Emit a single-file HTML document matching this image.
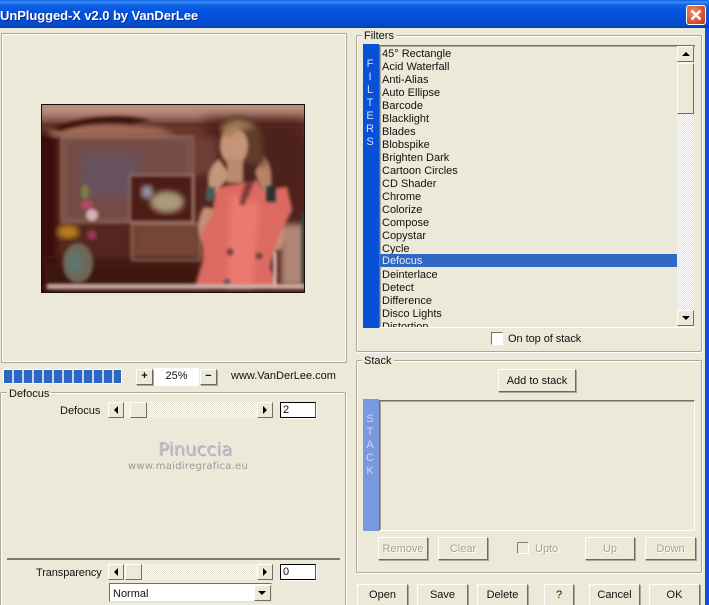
<!DOCTYPE html>
<html><head><meta charset="utf-8"><style>
html,body{margin:0;padding:0;width:709px;height:605px;overflow:hidden}
body{position:relative;background:#ece9d8;font:11px/13px "Liberation Sans",sans-serif;color:#111}
#r{left:0;top:0;width:709px;height:605px;overflow:hidden;background:#ece9d8}
div,span{position:absolute;box-sizing:border-box;white-space:nowrap}
.grp{border:1px solid #aca899;box-shadow:inset 1px 1px 0 #fff,1px 1px 0 #fff;border-radius:2px}
.lg{background:#ece9d8;padding:0 2px;line-height:13px;height:13px}
.b{background:#ece9d8;border:1px solid;border-color:#fff #6f6c5f #6f6c5f #fff;box-shadow:1px 1px 0 #aca899;text-align:center;line-height:22px;height:23px}
.dis{color:#a5a294;text-shadow:1px 1px 0 #fff}
.track{background:repeating-conic-gradient(#fff 0 25%,#e4e1d0 0 50%) 0 0/2px 2px}
.sb{background:#ece9d8;border:1px solid;border-color:#fff #716f64 #716f64 #fff}
.up{width:0;height:0;border-left:4px solid transparent;border-right:4px solid transparent;border-bottom:4px solid #000}
.dn{width:0;height:0;border-left:4px solid transparent;border-right:4px solid transparent;border-top:4px solid #000}
.lf{width:0;height:0;border-top:4px solid transparent;border-bottom:4px solid transparent;border-right:4px solid #000}
.rt{width:0;height:0;border-top:4px solid transparent;border-bottom:4px solid transparent;border-left:4px solid #000}
.sun{background:#ece9d8;border:1px solid;border-color:#716f64 #fff #fff #716f64;box-shadow:inset 1px 1px 0 #aca899}
.edit{background:#fff;border:1px solid #000;border-right-color:#555;line-height:15px;padding-left:2px;box-shadow:1px 1px 0 #fff}
.li{left:382px;height:13px;line-height:13px}
.v{text-align:center;width:12px;line-height:13px;color:#d8e6ff}
</style></head><body><div id="r">
<!-- title bar -->
<div style="left:0;top:0;width:709px;height:28px;background:linear-gradient(#0a5fe0 0,#3a8cf5 2px,#0f62e4 5px,#0453dc 12px,#0450d8 20px,#0349c4 26px,#0a3fa8 28px)"></div>
<div style="left:0;top:7px;font:bold 13px/17px 'Liberation Sans',sans-serif;color:#fff;text-shadow:1px 1px 0 #0a2f90;letter-spacing:-.07px">UnPlugged-X v2.0 by VanDerLee</div>
<div style="left:686px;top:5px;width:20px;height:20px;border-radius:3px;border:1px solid #fff;background:radial-gradient(circle at 35% 35%,#ee9070,#d8532f 60%,#b83a18)"></div>
<svg style="position:absolute;left:686px;top:5px" width="20" height="20"><path d="M5.5 5.5L14.500 14.500M14.500 5.500L5.500 14.500" stroke="#fff" stroke-width="2.300" fill="none"/></svg>
<div style="left:705px;top:28px;width:4px;height:577px;background:#0a50d8"></div>

<!-- preview panel -->
<div style="left:1px;top:33px;width:346px;height:330px;border:1px solid #aca899;box-shadow:-1px -1px 0 #fff inset,1px 1px 0 #fff inset;border-radius:1px"></div>
<svg style="position:absolute;left:41px;top:104px" width="264" height="189" viewBox="0 0 264 189">
<defs>
<filter id="f1"><feGaussianBlur stdDeviation="6"/></filter>
<filter id="f2"><feGaussianBlur stdDeviation="3"/></filter>
<filter id="f3"><feGaussianBlur stdDeviation="1.300"/></filter>
<filter id="fa" x="-5%" y="-5%" width="110%" height="110%"><feGaussianBlur stdDeviation="1.100"/></filter>
<clipPath id="c"><rect width="264" height="189"/></clipPath>
</defs>
<rect width="264" height="189" fill="#55261f"/>
<g clip-path="url(#c)"><g filter="url(#fa)">
<rect x="-10" y="-10" width="290" height="26" fill="#bd8f80" filter="url(#f1)"/>
<rect x="-10" y="20" width="290" height="14" fill="#6a372c" filter="url(#f2)"/>
<rect x="-10" y="30" width="26" height="180" fill="#3a0c0e" filter="url(#f2)"/>
<rect x="21" y="33" width="131" height="85" fill="#744c44" filter="url(#f2)"/>
<rect x="40" y="48" width="60" height="45" fill="#66525f" filter="url(#f1)"/>
<rect x="91" y="119" width="68" height="37" fill="#754535" filter="url(#f2)"/>
<rect x="0" y="155" width="160" height="30" fill="#3c1510" filter="url(#f1)"/>
<path d="M8 27Q55 14 120 24L135 32 10 33Z" fill="#a06a58" filter="url(#f2)"/>
<path d="M10 24Q60 5 110 16L90 20Q50 16 20 27Z" fill="#3e1410" filter="url(#f3)"/>
<rect x="165" y="15" width="99" height="100" fill="#4e201b" filter="url(#f1)"/>
<rect x="240" y="120" width="24" height="62" fill="#ae8674" filter="url(#f2)"/>
<rect x="260" y="110" width="4" height="72" fill="#2a4a3a" filter="url(#f3)"/>
<!-- frames -->
<rect x="21" y="33" width="131" height="85" fill="none" stroke="#b8917f" stroke-width="1.500" opacity=".85" filter="url(#f3)"/>
<rect x="25" y="36" width="122" height="79" fill="none" stroke="#9c7062" stroke-width="1.500" opacity=".7" filter="url(#f3)"/>
<rect x="151" y="33" width="25" height="38" fill="#8a5a50" opacity=".5" filter="url(#f2)"/>
<rect x="89" y="72" width="62" height="46" fill="#4d1d12" filter="url(#f3)"/>
<rect x="89" y="71" width="63" height="47" fill="none" stroke="#c49e90" stroke-width="1.300" opacity=".85" filter="url(#f3)"/>
<ellipse cx="126" cy="98" rx="17" ry="11" fill="#a99a7a" filter="url(#f2)"/>
<ellipse cx="106" cy="88" rx="6" ry="7" fill="#9a98b0" filter="url(#f2)"/>
<rect x="91" y="120" width="68" height="36" fill="none" stroke="#b8917f" stroke-width="1.500" opacity=".85" filter="url(#f3)"/>
<!-- vase & flowers -->
<ellipse cx="37" cy="159" rx="15" ry="20" fill="#6e6856" filter="url(#f3)"/>
<ellipse cx="34" cy="158" rx="8" ry="11" fill="#5f7470" filter="url(#f2)"/>
<ellipse cx="44" cy="88" rx="4" ry="7" fill="#7b7f45" filter="url(#f3)"/>
<ellipse cx="46" cy="101" rx="6" ry="5" fill="#ae4c66" filter="url(#f3)"/>
<ellipse cx="51" cy="111" rx="6" ry="6" fill="#d8b0bc" filter="url(#f3)"/>
<ellipse cx="27" cy="128" rx="11" ry="7" fill="#b8821e" filter="url(#f2)"/>
<ellipse cx="51" cy="131" rx="5" ry="5" fill="#9c3656" filter="url(#f3)"/>
<!-- woman -->
<path d="M163 103Q152 120 162 140L175 150 176 105ZM230 100Q252 125 240 145L228 150 226 105Z" fill="#c68e74" filter="url(#f3)"/>
<path d="M174 84L216 76 222 86 246 83 251 106 236 136 229 163 236 183 154 183 162 156 161 129 172 109Z" fill="#dc6a62" filter="url(#f3)"/>
<path d="M190 90L186 183H212L218 100Z" fill="#ea7a70" filter="url(#f2)"/>
<path d="M178 55Q164 66 168 84L172 92 178 84 190 72Z" fill="#c4967c" filter="url(#f3)"/>
<path d="M222 52Q232 60 230 82L226 94 218 80 214 68Z" fill="#b88468" filter="url(#f3)"/>
<path d="M180 20Q200 2 220 26L224 62 208 60 185 50Z" fill="#5f3d2c" filter="url(#f2)"/>
<ellipse cx="193" cy="42" rx="14" ry="19" fill="#c69478" filter="url(#f3)"/>
<path d="M180 24Q198 8 214 24L198 26 184 34Z" fill="#a07a56" filter="url(#f2)"/>
<rect x="186" y="55" width="16" height="24" fill="#bb8a70" filter="url(#f3)"/>
<path d="M207 70L198 100 203 102 214 76Z" fill="#4a2420" opacity=".65" filter="url(#f3)"/>
<rect x="165" y="83" width="9" height="14" fill="#4c5a58" filter="url(#f3)"/>
<rect x="225" y="82" width="10" height="16" fill="#26302e" filter="url(#f3)"/>
<circle cx="189" cy="148" r="3.500" fill="#6c3a40" filter="url(#f3)"/>
<circle cx="218" cy="152" r="3.500" fill="#6c3a40" filter="url(#f3)"/>
<circle cx="186" cy="178" r="3.500" fill="#6c5060" filter="url(#f3)"/>
<rect x="232" y="148" width="4" height="35" fill="#dcbcb6" filter="url(#f3)"/>
<rect x="6" y="180" width="258" height="5" fill="#cfaea8" filter="url(#f3)"/>
</g></g>
<rect x=".5" y=".5" width="263" height="188" fill="none" stroke="#111"/>
</svg>

<!-- progress & zoom -->
<div style="left:3px;top:369px;width:119px;height:15px;background:#fff"></div>
<div style="left:4px;top:370px;width:117px;height:13px;background:repeating-linear-gradient(90deg,#2c66c4 0 8px,#c6d4ea 8px 10px)"></div>
<div class="b" style="left:136px;top:369px;width:17px;height:16px;line-height:13px;font-weight:bold">+</div>
<div style="left:154px;top:368px;width:45px;height:18px;background:#fff;text-align:center;line-height:17px">25%</div>
<div class="b" style="left:200px;top:369px;width:17px;height:16px;line-height:13px;font-weight:bold">−</div>
<div style="left:231px;top:370px">www.VanDerLee.com</div>

<!-- defocus group -->
<div class="grp" style="left:0;top:392px;width:346px;height:230px"></div>
<div class="lg" style="left:7px;top:388px">Defocus</div>
<div style="left:60px;top:405px">Defocus</div>
<div class="track" style="left:108px;top:402px;width:165px;height:16px"></div>
<div class="sb" style="left:108px;top:402px;width:16px;height:16px"></div><div class="lf" style="left:114px;top:406px"></div>
<div class="sb" style="left:130px;top:402px;width:17px;height:16px"></div>
<div class="sb" style="left:257px;top:402px;width:16px;height:16px"></div><div class="rt" style="left:263px;top:406px"></div>
<div class="edit" style="left:280px;top:402px;width:36px;height:16px">2</div>
<div style="left:158px;top:439px;font:18px/22px 'DejaVu Sans',sans-serif;color:#bcc0cf;text-shadow:1px 1px 0 #b0b0b0">Pinuccia</div>
<div style="left:128px;top:460px;font:10px/14px 'DejaVu Sans',sans-serif;color:#999;letter-spacing:.25px">www.maidiregrafica.eu</div>

<div style="left:7px;top:558px;width:333px;height:2px;background:#7d7a68"></div>
<div style="left:36px;top:567px;letter-spacing:-.1px">Transparency</div>
<div class="track" style="left:108px;top:564px;width:165px;height:16px"></div>
<div class="sb" style="left:108px;top:564px;width:16px;height:16px"></div><div class="lf" style="left:114px;top:568px"></div>
<div class="sb" style="left:125px;top:564px;width:17px;height:16px"></div>
<div class="sb" style="left:257px;top:564px;width:16px;height:16px"></div><div class="rt" style="left:263px;top:568px"></div>
<div class="edit" style="left:280px;top:564px;width:36px;height:16px">0</div>
<div style="left:109px;top:583px;width:163px;height:19px;background:#fff;border:1px solid #716f64;border-right-color:#ddd;border-bottom-color:#ddd;line-height:20px;padding-left:3px">Normal</div>
<div class="sb" style="left:254px;top:585px;width:17px;height:16px"></div><div class="dn" style="left:258px;top:591px"></div>

<!-- filters group -->
<div class="grp" style="left:356px;top:35px;width:346px;height:317px"></div>
<div class="lg" style="left:362px;top:30px">Filters</div>
<div style="left:363px;top:44px;width:16px;height:284px;background:#0850d8"></div>
<div class="sun" style="left:379px;top:45px;width:316px;height:283px;border-right:0;border-bottom:1px solid #fff"></div>
<div class="v" style="left:364px;top:58px;color:#cfe0ff;white-space:pre">F
I
L
T
E
R
S</div>
<div class="li" style="top:48px">45° Rectangle</div>
<div class="li" style="top:61px">Acid Waterfall</div>
<div class="li" style="top:74px">Anti-Alias</div>
<div class="li" style="top:87px">Auto Ellipse</div>
<div class="li" style="top:100px">Barcode</div>
<div class="li" style="top:113px">Blacklight</div>
<div class="li" style="top:126px">Blades</div>
<div class="li" style="top:139px">Blobspike</div>
<div class="li" style="top:152px">Brighten Dark</div>
<div class="li" style="top:165px">Cartoon Circles</div>
<div class="li" style="top:178px">CD Shader</div>
<div class="li" style="top:191px">Chrome</div>
<div class="li" style="top:204px">Colorize</div>
<div class="li" style="top:217px">Compose</div>
<div class="li" style="top:230px">Copystar</div>
<div class="li" style="top:243px">Cycle</div>
<div style="left:380px;top:254px;width:297px;height:13px;background:#3168c3"></div>
<div class="li" style="top:256px;height:11px;line-height:11px;color:#e6ecf8">Defocus</div>
<div class="li" style="top:269px">Deinterlace</div>
<div class="li" style="top:282px">Detect</div>
<div class="li" style="top:295px">Difference</div>
<div class="li" style="top:308px">Disco Lights</div>
<div style="left:380px;top:321px;width:297px;height:6px;overflow:hidden"><div class="li" style="left:2px;top:0">Distortion</div></div>
<div class="track" style="left:677px;top:46px;width:17px;height:281px"></div>
<div class="sb" style="left:677px;top:46px;width:17px;height:16px"></div><div class="up" style="left:682px;top:52px"></div>
<div class="sb" style="left:677px;top:63px;width:17px;height:51px"></div>
<div class="sb" style="left:677px;top:310px;width:17px;height:16px"></div><div class="dn" style="left:682px;top:316px"></div>
<div style="left:491px;top:332px;width:12px;height:13px;background:#fff;border:1px solid #716f64;border-right-color:#fff;border-bottom-color:#fff"></div>
<div style="left:508px;top:333px;letter-spacing:-.05px">On top of stack</div>

<!-- stack group -->
<div class="grp" style="left:356px;top:360px;width:346px;height:213px"></div>
<div class="lg" style="left:362px;top:355px">Stack</div>
<div class="b" style="left:498px;top:369px;width:78px">Add to stack</div>
<div style="left:363px;top:399px;width:16px;height:132px;background:#7a98e0"></div>
<div class="sun" style="left:379px;top:400px;width:316px;height:131px;border-bottom:1px solid #fff"></div>
<div class="v" style="left:364px;top:413px;color:#c8d8f4;white-space:pre">S
T
A
C
K</div>
<div class="b dis" style="left:378px;top:537px;width:50px">Remove</div>
<div class="b dis" style="left:438px;top:537px;width:50px">Clear</div>
<div style="left:517px;top:542px;width:12px;height:12px;border:1px solid #817e70;border-right-color:#fff;border-bottom-color:#fff"></div>
<div class="dis" style="left:535px;top:543px">Upto</div>
<div class="b dis" style="left:585px;top:537px;width:50px">Up</div>
<div class="b dis" style="left:645px;top:537px;width:51px">Down</div>

<!-- bottom buttons -->
<div class="b" style="left:357px;top:584px;width:51px;height:26px;line-height:21px">Open</div>
<div class="b" style="left:417px;top:584px;width:51px;height:26px;line-height:21px">Save</div>
<div class="b" style="left:477px;top:584px;width:51px;height:26px;line-height:21px">Delete</div>
<div class="b" style="left:544px;top:584px;width:30px;height:26px;line-height:21px">?</div>
<div class="b" style="left:589px;top:584px;width:51px;height:26px;line-height:21px">Cancel</div>
<div class="b" style="left:649px;top:584px;width:51px;height:26px;line-height:21px">OK</div>
</div></body></html>
